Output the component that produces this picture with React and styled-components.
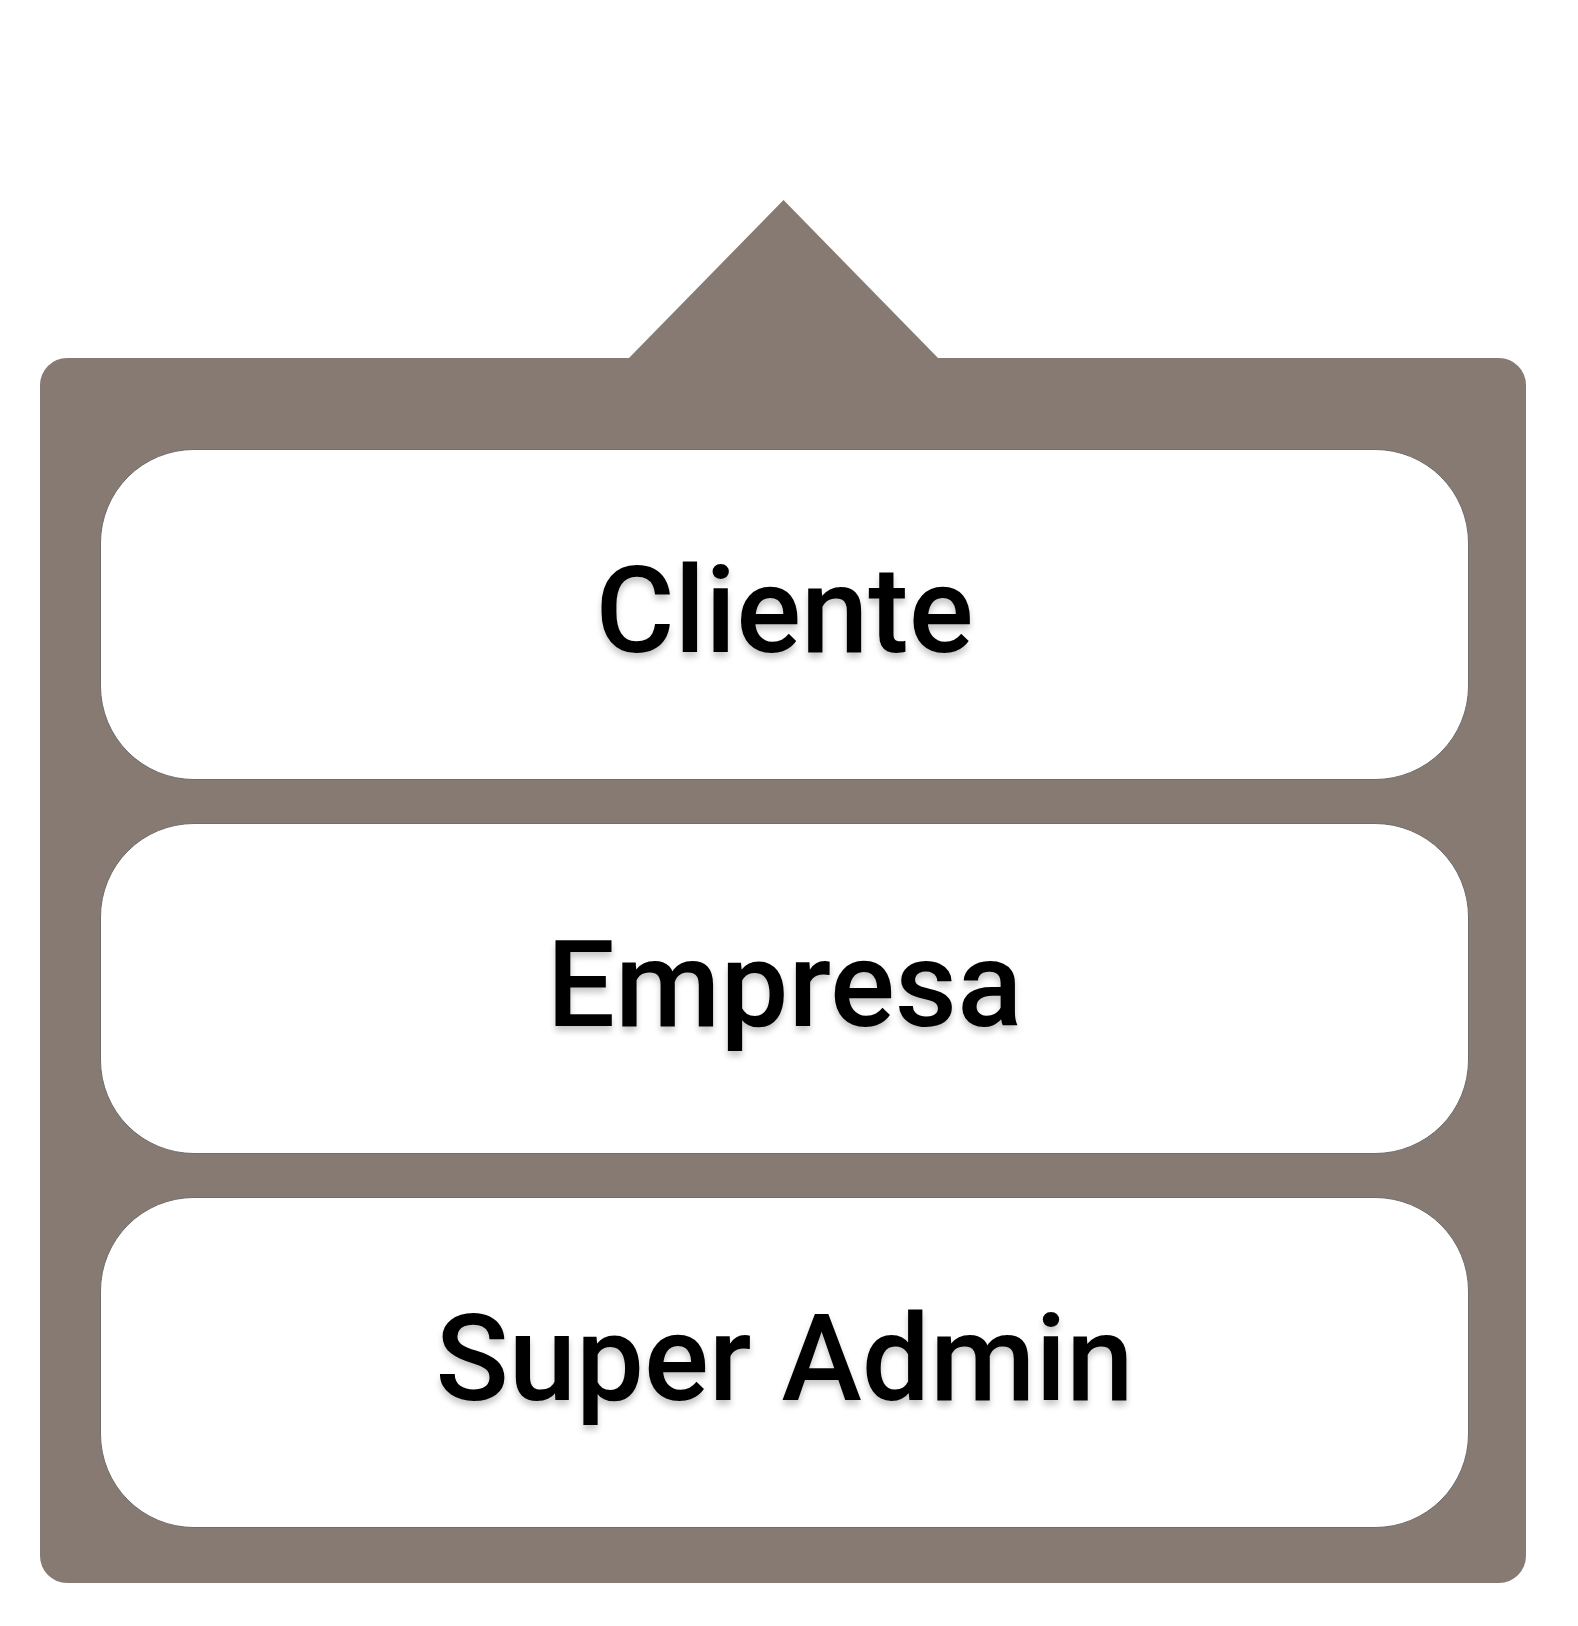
import React from "react";
import styled, { createGlobalStyle } from "styled-components";

const Global = createGlobalStyle`
  html, body { margin: 0; padding: 0; background: #ffffff; }
  body { font-family: Roboto, "Liberation Sans", sans-serif; }
`;

const Page = styled.div`
  width: 1578px;
  height: 1626px;
  box-sizing: border-box;
  padding: 358px 0 0 40px;
`;

const Menu = styled.div`
  position: relative;
  width: 1486px;
  height: 1225px;
  box-sizing: border-box;
  background: #867a73;
  border-radius: 27px;
  padding: 91px 57px 0 60px;
  display: flex;
  flex-direction: column;
  gap: 43px;

  &::before {
    content: "";
    position: absolute;
    left: 588px;
    top: -158px;
    width: 311px;
    height: 159px;
    background: #867a73;
    clip-path: polygon(50% 0, 100% 100%, 0 100%);
  }
`;

const Option = styled.button`
  height: 331px;
  box-sizing: border-box;
  border: 1px solid #6d6d6d;
  border-radius: 94px;
  background: #ffffff;
  display: flex;
  align-items: center;
  justify-content: center;
  padding: 0 0 8px;
  font-family: Roboto, "Liberation Sans", sans-serif;
  font-weight: 500;
  font-size: 121px;
  letter-spacing: 0;
  color: #000;
  text-shadow: 0 5px 6px rgba(0, 0, 0, 0.22);
  cursor: pointer;
`;

export default function App() {
  return (
    <>
      <Global />
      <Page>
        <Menu>
          <Option>Cliente</Option>
          <Option>Empresa</Option>
          <Option>Super Admin</Option>
        </Menu>
      </Page>
    </>
  );
}
